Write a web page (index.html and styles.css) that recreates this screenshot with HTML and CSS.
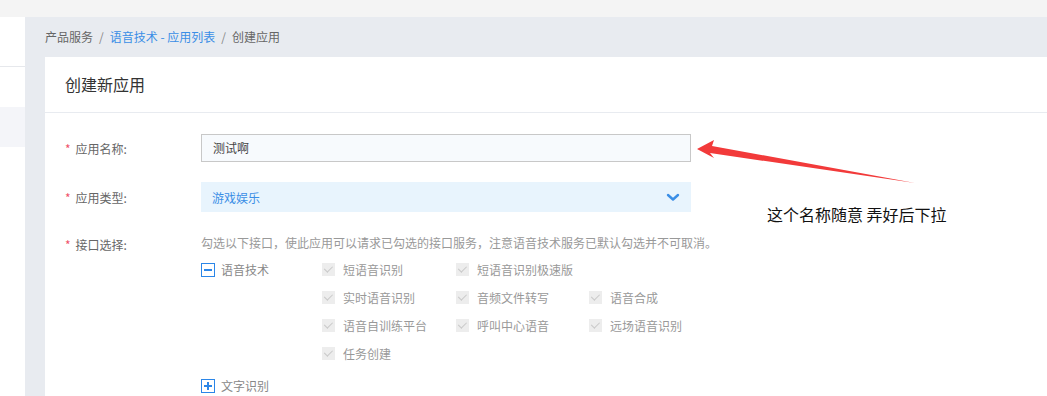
FILE: index.html
```html
<!DOCTYPE html>
<html lang="zh">
<head>
<meta charset="utf-8">
<title>创建应用</title>
<link rel="stylesheet" href="styles.css">
</head>
<body>
<div class="topbar"></div>
<div class="layout">
  <aside class="sidebar">
    <div class="side-top"></div>
    <div class="side-gap"></div>
    <div class="side-active"></div>
  </aside>
  <main class="main">
    <div class="crumbs">
      <span>产品服务</span><span class="sep">/</span><a class="link">语音技术 - 应用列表</a><span class="sep">/</span><span>创建应用</span>
    </div>
    <section class="card">
      <div class="card-head">创建新应用</div>
      <div class="form">
        <div class="row row-name">
          <div class="label"><i>*</i>应用名称:</div>
          <div class="input">测试啊</div>
        </div>
        <div class="row row-type">
          <div class="label"><i>*</i>应用类型:</div>
          <div class="select">
            <span>游戏娱乐</span>
            <svg class="chev" width="14" height="9" viewBox="0 0 14 9"><path d="M2 2 L7 6.5 L12 2" fill="none" stroke="#3a8ee6" stroke-width="2.4" stroke-linecap="round" stroke-linejoin="round"/></svg>
          </div>
        </div>
        <div class="row row-api">
          <div class="label"><i>*</i>接口选择:</div>
          <div class="api">
            <div class="hint">勾选以下接口，使此应用可以请求已勾选的接口服务，注意语音技术服务已默认勾选并不可取消。</div>
            <div class="group">
              <div class="group-title"><span class="tog minus"></span>语音技术</div>
              <div class="items">
                <div class="item"><span class="cb"></span>短语音识别</div>
                <div class="item"><span class="cb"></span>短语音识别极速版</div>
                <div class="item"></div>
                <div class="item"><span class="cb"></span>实时语音识别</div>
                <div class="item"><span class="cb"></span>音频文件转写</div>
                <div class="item"><span class="cb"></span>语音合成</div>
                <div class="item"><span class="cb"></span>语音自训练平台</div>
                <div class="item"><span class="cb"></span>呼叫中心语音</div>
                <div class="item"><span class="cb"></span>远场语音识别</div>
                <div class="item"><span class="cb"></span>任务创建</div>
              </div>
            </div>
            <div class="group group2">
              <div class="group-title"><span class="tog plus"></span>文字识别</div>
            </div>
          </div>
        </div>
      </div>
    </section>
  </main>
</div>
<svg class="arrow" width="1047" height="396" viewBox="0 0 1047 396">
  <polygon points="697,149 714,140 712,146 915,183 710,153 714,158" fill="#f23a3a"/>
</svg>
<div class="note">这个名称随意 弄好后下拉</div>
</body>
</html>
```
FILE: styles.css
```css
* { box-sizing: border-box; }
html, body { margin: 0; padding: 0; }
body {
  width: 1047px;
  height: 396px;
  overflow: hidden;
  position: relative;
  font-family: "Noto Sans CJK SC", "Noto Sans", sans-serif;
  background: #e8ebf0;
}
.topbar { height: 17px; background: #f4f4f4; }
.layout { display: flex; height: 379px; }
.sidebar { width: 25px; background: #fff; display: flex; flex-direction: column; }
.side-top { height: 50px; border-bottom: 1px solid #e6e8ec; }
.side-gap { height: 40px; }
.side-active { height: 40px; background: #f4f5f9; }
.main { flex: 1; background: #e8ebf0; padding-left: 20px; display: flex; flex-direction: column; }
.crumbs {
  height: 40px; line-height: 40px;
  font-size: 12px; color: #666;
}
.crumbs .sep { margin: 0 6px; color: #888; }
.crumbs .link { color: #3a8ee6; }
.card { flex: 1; background: #fff; }
.card-head {
  height: 56px; line-height: 55px;
  padding-left: 20px;
  font-size: 16px; color: #333;
  border-bottom: 1px solid #e8ebf0;
}
.form { padding-left: 20px; padding-top: 21px; }
.row { display: flex; }
.label {
  width: 136px; font-size: 12px; color: #666;
}
.label i { font-style: normal; color: #f0536b; margin-right: 5px; }
.row-name { height: 28px; align-items: center; }
.input {
  width: 490px; height: 28px;
  border: 1px solid #c8c8c8;
  background: #f7fafd;
  font-size: 12px; color: #444;
  padding-left: 11px; line-height: 26px;
}
.row-type { margin-top: 20px; height: 30px; align-items: center; }
.select {
  width: 490px; height: 30px;
  background: #e8f4fd;
  display: flex; align-items: center; justify-content: space-between;
  padding: 0 11px 0 11px;
  font-size: 12px; color: #3a8ee6;
}
.chev { display: block; margin-top: 1px; }
.row-api { margin-top: 23px; align-items: flex-start; }
.row-api .label { line-height: 18px; margin-top: 1px; }
.api { font-size: 12px; }
.hint { color: #999; line-height: 16px; }
.group { display: flex; margin-top: 4px; }
.group-title {
  width: 121px; display: flex; align-items: flex-start;
  color: #888; line-height: 16px; height: 16px; margin-top: 7px;
}
.tog {
  width: 14px; height: 14px; border: 1.5px solid #2b86e8;
  margin-right: 6px; margin-top: 1px; position: relative; flex: none;
}
.tog::before {
  content: ""; position: absolute; left: 2px; right: 2px; top: 4.5px; height: 2px; background: #2b86e8;
}
.tog.plus::after {
  content: ""; position: absolute; top: 2px; bottom: 2px; left: 4.5px; width: 2px; background: #2b86e8;
}
.items {
  display: grid; grid-template-columns: 134px 133px 134px;
  grid-auto-rows: 28px;
}
.item { display: flex; align-items: center; color: #999; }
.cb {
  width: 13px; height: 13px; background: #ededed;
  margin-right: 8px; position: relative; flex: none;
}
.cb::after {
  content: ""; position: absolute; left: 4px; top: 1.5px;
  width: 3.5px; height: 7px;
  border: solid #c9c9c9; border-width: 0 1.6px 1.6px 0;
  transform: rotate(45deg);
}
.group2 { margin-top: 4px; }
.arrow { position: absolute; left: 0; top: 0; pointer-events: none; }
.note {
  position: absolute; left: 767px; top: 204px;
  font-size: 16px; color: #111; line-height: 20px;
}
```
